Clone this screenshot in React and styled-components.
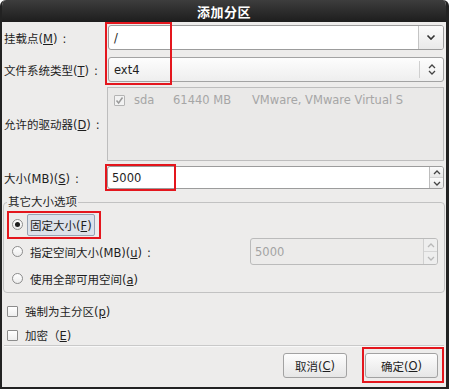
import React from 'react';
import styled, { createGlobalStyle } from 'styled-components';

const GlobalStyle = createGlobalStyle`
  html, body {
    margin: 0;
    padding: 0;
    background: #ffffff;
  }
  body {
    font-family: "DejaVu Sans", "Noto Sans CJK SC", sans-serif;
    font-size: 11px;
    color: #1e1e1e;
  }
`;

const Window = styled.div`
  position: relative;
  width: 449px;
  height: 389px;
  box-sizing: border-box;
  background: #edeceb;
  border: solid #222222;
  border-width: 0 3px 2px 2px;
  border-radius: 6px 6px 0 0;
  display: flex;
  flex-direction: column;
  overflow: hidden;
`;

const TitleBar = styled.div`
  height: 22px;
  flex: none;
  background: linear-gradient(#3d3d3d, #1d1d1d);
  color: #ffffff;
  font-size: 13px;
  font-weight: bold;
  display: flex;
  align-items: center;
  justify-content: center;
  letter-spacing: 0.5px;
`;

const Body = styled.div`
  flex: 1;
  display: flex;
  flex-direction: column;
  padding: 3px 2px 0 2px;
`;

const FieldRow = styled.div`
  display: flex;
  align-items: center;
  height: ${(p) => p.$h}px;
  margin-top: ${(p) => p.$mt}px;
`;

const Label = styled.div`
  width: 103px;
  flex: none;
  white-space: nowrap;
  font-size: 11.5px;
`;

const Colon = styled.span`
  margin-left: 5px;
`;

const EntryCombo = styled.div`
  flex: 1;
  height: 100%;
  margin-left: 1px;
  box-sizing: border-box;
  display: flex;
  border: 1px solid #9c9c9c;
  border-radius: 3px;
  background: #ffffff;
  overflow: hidden;
`;

const EntryText = styled.div`
  flex: 1;
  display: flex;
  align-items: center;
  padding-left: ${(p) => p.$pl || 5}px;
  color: ${(p) => (p.$disabled ? '#a3a3a3' : '#1e1e1e')};
  font-size: 11.5px;
`;

const DropButton = styled.div`
  width: 24px;
  flex: none;
  border-left: 1px solid #c4c4c4;
  background: linear-gradient(#fbfbfb, #e9e9e9);
  display: flex;
  align-items: center;
  justify-content: center;
`;

const SelectCombo = styled.div`
  flex: 1;
  height: 100%;
  margin-left: 1px;
  box-sizing: border-box;
  display: flex;
  align-items: center;
  border: 1px solid #a3a3a3;
  border-radius: 3px;
  background: linear-gradient(#fdfdfd, #eeeeee);
`;

const SelectText = styled.div`
  flex: 1;
  padding-left: 5px;
  font-size: 11.5px;
`;

const SelectDivider = styled.div`
  width: 1px;
  height: 17px;
  background: #cfcfcf;
  margin-right: 5px;
`;

const SelectArrows = styled.div`
  width: 14px;
  display: flex;
  justify-content: center;
  margin-right: 4px;
`;

const DriveList = styled.div`
  flex: 1;
  height: 100%;
  box-sizing: border-box;
  border: 1px solid #bdbdbd;
  background: #eae9e8;
  padding: 5px 6px;
`;

const DriveRow = styled.div`
  display: flex;
  align-items: center;
  color: #a6a6a6;
  font-size: 11.5px;
`;

const DriveCell = styled.span`
  width: ${(p) => p.$w}px;
  flex: none;
  white-space: nowrap;
`;

const SpinEntry = styled.div`
  flex: ${(p) => (p.$width ? 'none' : 1)};
  width: ${(p) => (p.$width ? `${p.$width}px` : 'auto')};
  height: 100%;
  box-sizing: border-box;
  display: flex;
  border: 1px solid ${(p) => (p.$disabled ? '#bbbbbb' : '#9c9c9c')};
  border-radius: 3px;
  background: ${(p) => (p.$disabled ? '#ecebea' : '#ffffff')};
  overflow: hidden;
  margin-left: ${(p) => (p.$auto ? 'auto' : '0')};
  margin-right: ${(p) => p.$mr || 0}px;
`;

const SpinButtons = styled.div`
  width: 13px;
  flex: none;
  display: flex;
  flex-direction: column;
  border-left: 1px solid ${(p) => (p.$disabled ? '#d0d0d0' : '#bdbdbd')};
`;

const SpinHalf = styled.div`
  flex: 1;
  display: flex;
  align-items: center;
  justify-content: center;
  background: ${(p) => (p.$disabled ? '#eeeeee' : 'linear-gradient(#fbfbfb, #e8e8e8)')};
  & + & {
    border-top: 1px solid ${(p) => (p.$disabled ? '#d6d6d6' : '#c8c8c8')};
  }
`;

const Group = styled.fieldset`
  margin: 6px -1px 0 -1px;
  padding: 0;
  border: 1px solid #c2c2c2;
  border-radius: 4px;
  min-width: 0;
`;

const Legend = styled.legend`
  margin-left: 3px;
  padding: 0 1px;
  line-height: 14px;
  font-size: 11.5px;
`;

const OptionList = styled.div`
  margin-top: 2px;
  display: flex;
  flex-direction: column;
`;

const RadioRow = styled.div`
  height: 27px;
  display: flex;
  align-items: center;
  padding-left: 8px;
`;

const Radio = styled.div`
  width: 11px;
  height: 11px;
  box-sizing: border-box;
  flex: none;
  border-radius: 50%;
  border: 1px solid #8c8c8c;
  background: linear-gradient(#ffffff, #ececec);
  display: flex;
  align-items: center;
  justify-content: center;
  &::after {
    content: '';
    width: 5px;
    height: 5px;
    border-radius: 50%;
    background: ${(p) => (p.$checked ? '#1e1e1e' : 'transparent')};
  }
`;

const OptionLabel = styled.div`
  margin-left: 4px;
  padding: 2px 2px;
  border: 1px solid ${(p) => (p.$focus ? '#97a3b4' : 'transparent')};
  border-radius: 2px;
  background: ${(p) => (p.$focus ? '#dce2ea' : 'transparent')};
  white-space: nowrap;
  font-size: 11.5px;
`;

const CheckList = styled.div`
  display: flex;
  flex-direction: column;
  gap: 4px;
  padding-top: 8px;
`;

const CheckRow = styled.div`
  height: 20px;
  display: flex;
  align-items: center;
  padding-left: 3px;
`;

const CheckBox = styled.div`
  width: 11px;
  height: 11px;
  box-sizing: border-box;
  flex: none;
  border: 1px solid ${(p) => (p.$disabled ? '#b4b4b4' : '#8c8c8c')};
  border-radius: 1px;
  background: ${(p) => (p.$disabled ? '#f2f2f2' : 'linear-gradient(#ffffff, #eeeeee)')};
  display: flex;
  align-items: center;
  justify-content: center;
  margin-right: ${(p) => p.$gap}px;
`;

const CheckText = styled.div`
  font-size: 11.5px;
`;

const Separator = styled.div`
  height: 1px;
  background: #c9c9c9;
  border-bottom: 1px solid #f8f8f8;
`;

const ButtonBar = styled.div`
  display: flex;
  justify-content: flex-end;
  gap: 18px;
  padding: 6px 6px 0 0;
`;

const Button = styled.div`
  width: ${(p) => p.$w}px;
  height: 25px;
  box-sizing: border-box;
  border: 1px solid #a2a2a2;
  border-radius: 3px;
  background: linear-gradient(#fdfdfd, #e6e6e6);
  display: flex;
  align-items: center;
  justify-content: center;
  font-size: 11.5px;
`;

const Mark = styled.div`
  position: absolute;
  border: 2px solid #e4161d;
  box-sizing: border-box;
  pointer-events: none;
  left: ${(p) => p.$x}px;
  top: ${(p) => p.$y}px;
  width: ${(p) => p.$w}px;
  height: ${(p) => p.$h}px;
`;

const ChevronDown = () => (
  <svg width="10" height="7" viewBox="0 0 10 7">
    <path d="M1.5 1.5 L5 5 L8.5 1.5" fill="none" stroke="#333" strokeWidth="1.6" />
  </svg>
);

const UpDown = () => (
  <svg width="8" height="13" viewBox="0 0 8 13">
    <path d="M1 5 L4 2 L7 5" fill="none" stroke="#444" strokeWidth="1.3" />
    <path d="M1 8 L4 11 L7 8" fill="none" stroke="#444" strokeWidth="1.3" />
  </svg>
);

const SmallArrow = ({ up, disabled }) => (
  <svg width="8" height="5" viewBox="0 0 8 5">
    <path
      d={up ? 'M1 4 L4 1 L7 4' : 'M1 1 L4 4 L7 1'}
      fill="none"
      stroke={disabled ? '#b8b8b8' : '#444'}
      strokeWidth="1.3"
    />
  </svg>
);

const Tick = () => (
  <svg width="9" height="9" viewBox="0 0 9 9">
    <path d="M1.5 4.5 L3.6 7 L7.5 1.5" fill="none" stroke="#9a9a9a" strokeWidth="1.5" />
  </svg>
);

const Spin = ({ value, disabled, width, auto, mr }) => (
  <SpinEntry $disabled={disabled} $width={width} $auto={auto} $mr={mr}>
    <EntryText $pl={4} $disabled={disabled}>{value}</EntryText>
    <SpinButtons $disabled={disabled}>
      <SpinHalf $disabled={disabled}><SmallArrow up disabled={disabled} /></SpinHalf>
      <SpinHalf $disabled={disabled}><SmallArrow disabled={disabled} /></SpinHalf>
    </SpinButtons>
  </SpinEntry>
);

const App = () => {
  return (
    <>
      <GlobalStyle />
      <Window>
        <TitleBar>添加分区</TitleBar>
        <Body>
          <FieldRow $h={25} $mt={0}>
            <Label>挂载点(<u>M</u>)<Colon>:</Colon></Label>
            <EntryCombo>
              <EntryText>/</EntryText>
              <DropButton><ChevronDown /></DropButton>
            </EntryCombo>
          </FieldRow>

          <FieldRow $h={25} $mt={7}>
            <Label>文件系统类型(<u>T</u>)<Colon>:</Colon></Label>
            <SelectCombo>
              <SelectText>ext4</SelectText>
              <SelectDivider />
              <SelectArrows><UpDown /></SelectArrows>
            </SelectCombo>
          </FieldRow>

          <FieldRow $h={74} $mt={5}>
            <Label>允许的驱动器(<u>D</u>)<Colon>:</Colon></Label>
            <DriveList>
              <DriveRow>
                <CheckBox $disabled $gap={9}><Tick /></CheckBox>
                <DriveCell $w={39}>sda</DriveCell>
                <DriveCell $w={79}>61440 MB</DriveCell>
                <DriveCell $w={180}>VMware, VMware Virtual S</DriveCell>
              </DriveRow>
            </DriveList>
          </FieldRow>

          <FieldRow $h={23} $mt={5}>
            <Label>大小(MB)(<u>S</u>)<Colon>:</Colon></Label>
            <Spin value="5000" />
          </FieldRow>

          <Group>
            <Legend>其它大小选项</Legend>
            <OptionList>
              <RadioRow>
                <Radio $checked />
                <OptionLabel $focus>固定大小(<u>F</u>)</OptionLabel>
              </RadioRow>
              <RadioRow>
                <Radio />
                <OptionLabel>指定空间大小(MB)(<u>u</u>)<Colon>:</Colon></OptionLabel>
                <Spin value="5000" disabled width={188} auto mr={6} />
              </RadioRow>
              <RadioRow>
                <Radio />
                <OptionLabel>使用全部可用空间(<u>a</u>)</OptionLabel>
              </RadioRow>
            </OptionList>
          </Group>

          <CheckList>
            <CheckRow>
              <CheckBox $gap={7} />
              <CheckText>強制为主分区(<u>p</u>)</CheckText>
            </CheckRow>
            <CheckRow>
              <CheckBox $gap={7} />
              <CheckText>加密（<u>E</u>)</CheckText>
            </CheckRow>
          </CheckList>

          <Separator />

          <ButtonBar>
            <Button $w={64}>取消(<u>C</u>)</Button>
            <Button $w={73}>确定(<u>O</u>)</Button>
          </ButtonBar>
        </Body>

        <Mark $x={103} $y={22} $w={67} $h={63} />
        <Mark $x={103} $y={164} $w={71} $h={27} />
        <Mark $x={5} $y={211} $w={94} $h={28} />
        <Mark $x={360} $y={347} $w={82} $h={36} />
      </Window>
    </>
  );
};

export default App;
